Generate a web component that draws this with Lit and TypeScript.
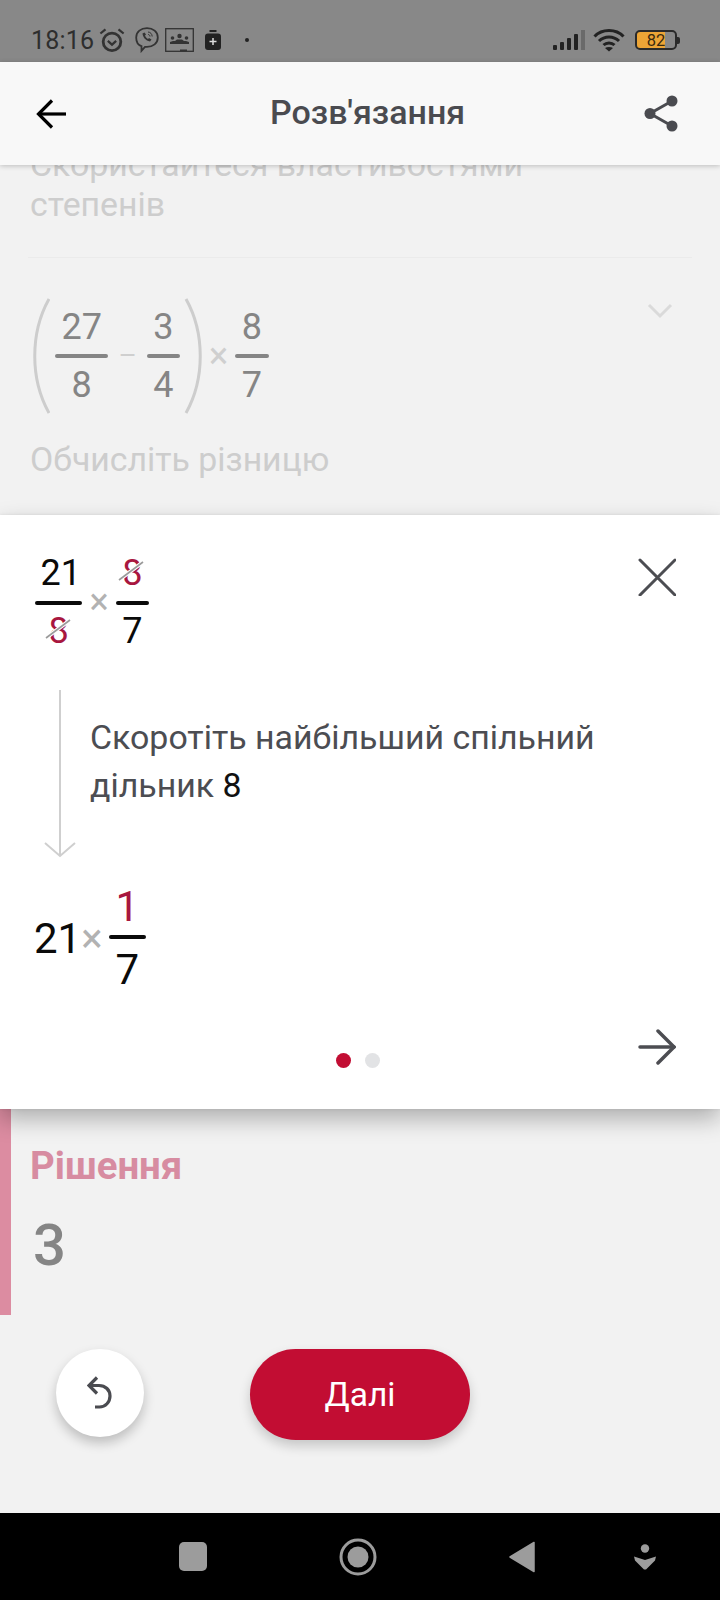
import { LitElement, html, css } from "lit";
import { customElement } from "lit/decorators.js";

const frac = (n: unknown, d: unknown, cls = "") => html`<span class="frac ${cls}"><span class="num">${n}</span><span class="bar"></span><span class="den">${d}</span></span>`;
const struck = html`<span class="struck">8<svg class="slash" viewBox="0 0 26 22" fill="none"><path d="M1 20L25 2" stroke="#fff" stroke-width="4"/><path d="M1 20L25 2" stroke="#9a9a9a" stroke-width="1.6"/></svg></span>`;

@customElement("app-root")
export class AppRoot extends LitElement {
  static styles = css`
    :host { display: flex; flex-direction: column; width: 720px; height: 1600px; overflow: hidden; font-family: Roboto, "Noto Sans", sans-serif; background: #f2f2f2; }
    svg { display: block; flex: none; }
    .status { height: 62px; flex: none; background: #888; display: flex; align-items: center; padding: 18px 0 0 31px; box-sizing: border-box; color: #2e2e2e; }
    .time { font-size: 25px; width: 68px; letter-spacing: .2px; }
    .status .i2 { margin-left: 10px; }
    .status .i3 { margin-left: 6px; }
    .status .i4 { margin-left: 11px; }
    .status .dot { width: 4px; height: 4px; border-radius: 50%; background: #222; margin-left: 24px; }
    .status .spacer { flex: 1; }
    .sig { margin-right: 1px; }
    .wifi { margin-left: 7px; margin-right: 1px; }
    .batt { width: 38px; height: 15px; padding: 1px 0 0; border: 2.5px solid #2a2a2a; border-radius: 5px; margin-left: 9px; box-sizing: content-box; overflow: hidden; font-size: 16.5px; color: #3a2a10; display: flex; align-items: center; justify-content: center; background: linear-gradient(90deg, #eda536 0 74%, transparent 74%); }
    .nub { width: 3px; height: 7px; background: #2a2a2a; margin-right: 40px; border-radius: 0 2px 2px 0; }
    .appbar { height: 103px; flex: none; background: #f8f8f8; display: flex; align-items: center; padding: 0 42px 0 36px; box-sizing: border-box; position: relative; z-index: 3; box-shadow: 0 1px 5px rgba(0,0,0,.22); }
    .title { font-size: 34px; font-weight: 500; color: #4a4b50; margin-left: 202px; flex: 1; padding-bottom: 3px; }
    .dim { height: 350px; flex: none; overflow: hidden; padding: 0 28px 0 30px; box-sizing: border-box; color: #cdcdcd; font-size: 33.800px; line-height: 40px; }
    .hint { margin-top: -20px; }
    .rule { height: 1px; background: #ebebeb; margin: 32px 0 0 -2px; }
    .eq { display: flex; align-items: center; margin-top: 38px; position: relative; color: #858585; height: 120px; }
    .chev { position: absolute; right: 19px; top: 7px; }
    .frac { display: inline-flex; flex-direction: column; align-items: center; line-height: 1; }
    .frac .bar { display: block; height: 4px; border-radius: 2px; background: currentColor; align-self: stretch; }
    .eq .frac { font-size: 36px; }
    .eq .num { margin-bottom: 9px; } .eq .den { margin-top: 9px; }
    .w1 { margin-left: 5px; } .w1 .num { padding: 0 6.500px; }
    .w2 .num { padding: 0 6.500px; } .w3 .num { padding: 0 6.500px; }
    .rp { margin-left: 4px; }
    .minus { color: #cfcfcf; font-size: 28px; margin: 0 10px; }
    .times { color: #cfcfcf; font-size: 36px; line-height: 1; margin: 0 7px 0 5px; }
    .note { margin-top: 24px; }
    .sheet { height: 594px; flex: none; background: #fff; position: relative; z-index: 2; box-shadow: 0 0 3px rgba(0,0,0,.08), 0 10px 22px rgba(0,0,0,.28); padding: 40px 44px 0 35px; box-sizing: border-box; display: flex; flex-direction: column; color: #0a0a0a; }
    .top { display: flex; justify-content: space-between; align-items: flex-start; }
    .expr { display: flex; align-items: center; }
    .expr .frac { font-size: 36px; }
    .expr .num { margin-bottom: 10px; } .expr .den { margin-top: 8px; }
    .x { color: #b2b2b2; font-size: 36px; line-height: 1; margin: 0 7px; }
    .close { margin-top: 3px; }
    .struck { position: relative; color: #a8173f; display: inline-block; }
    .slash { position: absolute; left: -4px; top: 5px; width: 26px; height: 22px; }
    .f1 .num { padding: 0 1.500px 0 5.500px; }
    .f2 .num { padding: 0 6.500px; }
    .step { display: flex; margin-top: 41px; height: 168px; margin-left: 9px; }
    .arrow { width: 32px; flex: none; }
    .step p { margin: 24px 0 0 14px; font-size: 33.900px; line-height: 47.500px; color: #4c4d52; }
    .step b { font-weight: 400; color: #111; }
    .res { display: flex; align-items: center; margin-top: 28px; font-size: 42px; margin-left: -1px; }
    .res .x { font-size: 40px; margin: 0 6px 0 0; }
    .res .frac { font-size: 42px; }
    .res .num { color: #a8173f; padding: 0 7px 7px; }
    .res .den { margin-top: 10px; }
    .foot { display: flex; align-items: center; position: relative; height: 60px; margin-top: 25px; justify-content: flex-end; }
    .foot svg { margin-top: 2px; }
    .dots { position: absolute; left: 301px; top: 37px; display: flex; gap: 14px; }
    .dots i { width: 15px; height: 15px; border-radius: 50%; background: #e2e3e5; }
    .dots i.on { background: #c20d33; }
    .lower { height: 404px; flex: none; display: flex; flex-direction: column; }
    .answer { height: 206px; flex: none; border-left: 11px solid #dc8ca1; box-sizing: border-box; padding: 35px 0 0 19px; }
    .alabel { font-size: 38.400px; font-weight: 700; color: #d78ca1; line-height: 44px; }
    .aval { font-size: 58px; line-height: 66px; font-weight: 500; color: #858585; margin-top: 24px; margin-left: 3px; }
    .btns { display: flex; align-items: flex-start; padding: 34px 0 0 56px; }
    .undo { width: 88px; height: 88px; border-radius: 50%; background: #fff; display: flex; align-items: center; justify-content: center; box-shadow: 0 6px 12px rgba(0,0,0,.22); }
    .next { width: 220px; height: 91px; border-radius: 46px; background: #c20d33; color: #fff; font-size: 33.500px; display: flex; align-items: center; justify-content: center; margin-left: 106px; box-shadow: 0 6px 12px rgba(0,0,0,.18); box-sizing: border-box; }
    .nav { flex: 1; background: #000; display: flex; align-items: center; padding: 0 0 0 179px; box-sizing: border-box; }
    .nav .sq { width: 28px; height: 29px; border-radius: 5px; background: #9c9c9c; flex: none; }
    .n2 { margin-left: 132px; } .n3 { margin-left: 132px; } .n4 { margin-left: 98px; }
  `;

  render() {
    return html`
      <div class="status">
        <span class="time">18:16</span>
        <svg width="26" height="26" viewBox="0 0 28 26" fill="none" stroke="#333"><circle cx="14" cy="15" r="9.500" stroke-width="3"/><path d="M9.500 14l4.500 4 4.500-4" stroke-width="2.400"/><path d="M1.500 6L7 1.500M26.500 6L21 1.500" stroke-width="2.400"/></svg>
        <svg class="i2" width="24" height="26" viewBox="0 0 24 26" fill="none" stroke="#333" stroke-width="1.800"><path d="M12 1.200c6 0 10.800 3.400 10.800 9.300S18 19.800 12 19.800h-2L6.500 23.800v-4.700C3 18 1.200 15 1.200 10.500 1.200 4.600 6 1.200 12 1.200z"/><path d="M7.500 6.500c.5 4 3 7 7.500 8l1.500-2-2.500-1.500-1 1c-1.500-.7-2.500-2-3-3.500l1-1L9.500 5.500z" fill="#333" stroke="none"/><path d="M13 5c2.500.2 4 1.800 4.200 4.500M13 7.500c1 0 2 .8 2 2" stroke-width="1"/></svg>
        <svg class="i3" width="29" height="25" viewBox="0 0 29 25" fill="none"><rect x=".7" y=".7" width="27.600" height="22.600" stroke="#333" stroke-width="1.300"/><circle cx="14.500" cy="8" r="2.200" fill="#333"/><circle cx="7.500" cy="10" r="1.800" fill="#333"/><circle cx="21.500" cy="10" r="1.800" fill="#333"/><path d="M5 16h19v-2l-3-1h-2l-2-1.500h-5L10 13H8l-3 1z" fill="#333"/><rect x="15" y="21.500" width="7" height="1.600" fill="#333"/></svg>
        <svg class="i4" width="16" height="20" viewBox="0 0 16 20"><rect x="4.500" y="0" width="7" height="2" fill="#222"/><rect x="0" y="3.500" width="16" height="16.500" rx="3" fill="#222"/><path d="M8 8v7M4.500 11.500h7" stroke="#ddd" stroke-width="1.500"/></svg>
        <span class="dot"></span>
        <span class="spacer"></span>
        <svg class="sig" width="32" height="20" viewBox="0 0 32 20"><g fill="#222"><rect x="0" y="15" width="4" height="5" rx="1"/><rect x="7" y="12" width="4" height="8" rx="1"/><rect x="14" y="8" width="4" height="12" rx="1"/><rect x="21" y="4" width="4" height="16" rx="1"/></g><rect x="28" y="0" width="4" height="20" fill="#6a6a6a"/></svg>
        <svg class="wifi" width="32" height="24" viewBox="0 0 32 24" fill="none" stroke="#222" stroke-width="3"><path d="M1.500 8.500C9 .5 23 .5 30.500 8.500"/><path d="M6 13c5.500-5.500 14.500-5.500 20 0"/><path d="M10.500 17c3-2.800 8-2.800 11 0"/><path d="M16 23.500l-4-3.500c2.300-1.500 5.700-1.500 8 0z" fill="#222" stroke="none"/></svg>
        <span class="batt">82</span><span class="nub"></span>
      </div>
      <div class="appbar">
        <svg width="32" height="30" viewBox="0 0 32 30" fill="none" stroke="#000" stroke-width="3.200"><path d="M30 15H3"/><path d="M16 1.500L2.500 15 16 28.500"/></svg>
        <span class="title">Розв'язання</span>
        <svg width="34" height="37" viewBox="0 0 34 37" fill="#4a4b50"><circle cx="28" cy="6" r="5.500"/><circle cx="28" cy="31" r="5.500"/><circle cx="6" cy="18.500" r="5.500"/><path d="M28 6L6 18.500 28 31" fill="none" stroke="#4a4b50" stroke-width="3"/></svg>
      </div>
      <div class="dim">
        <div class="hint">Скористайтеся властивостями<br />степенів</div>
        <div class="rule"></div>
        <div class="eq">
          <svg width="20" height="118" viewBox="0 0 20 118" fill="none" stroke="#cdcdcd" stroke-width="3"><path d="M19 2C0 36 0 82 19 116"/></svg>
          ${frac("27", "8", "w1")}
          <span class="minus">–</span>
          ${frac("3", "4", "w2")}
          <svg class="rp" width="20" height="118" viewBox="0 0 20 118" fill="none" stroke="#cdcdcd" stroke-width="3"><path d="M2 2C21 36 21 82 2 116"/></svg>
          <span class="times">×</span>
          ${frac("8", "7", "w3")}
          <svg class="chev" width="26" height="16" viewBox="0 0 26 16" fill="none" stroke="#dadada" stroke-width="3"><path d="M2 2l11 11L24 2"/></svg>
        </div>
        <div class="note">Обчисліть різницю</div>
      </div>
      <div class="sheet">
        <div class="top">
          <div class="expr">
            ${frac("21", struck, "f1")}
            <span class="x">×</span>
            ${frac(struck, "7", "f2")}
          </div>
          <svg class="close" width="38" height="38" viewBox="0 0 38 38" stroke="#4c4d52" stroke-width="3" stroke-linecap="round"><path d="M2 2l35 35M37 2L2 37"/></svg>
        </div>
        <div class="step">
          <svg class="arrow" width="32" height="168" viewBox="0 0 32 168" fill="none" stroke="#cfcfcf" stroke-width="2"><path d="M16 0V166"/><path d="M1 153l15 13 15-13"/></svg>
          <p>Скоротіть найбільший спільний<br />дільник <b>8</b></p>
        </div>
        <div class="res">
          <span>21</span><span class="x">×</span>
          ${frac("1", "7")}
        </div>
        <div class="foot">
          <div class="dots"><i class="on"></i><i></i></div>
          <svg width="38" height="36" viewBox="0 0 38 36" fill="none" stroke="#4c4d52" stroke-width="3.500" stroke-linecap="round"><path d="M2 18H36"/><path d="M20 2l16 16-16 16"/></svg>
        </div>
      </div>
      <div class="lower">
        <div class="answer">
          <div class="alabel">Рішення</div>
          <div class="aval">3</div>
        </div>
        <div class="btns">
          <div class="undo"><svg width="26" height="34" viewBox="0 0 26 34" fill="none" stroke="#4a4b50" stroke-width="3.200"><path d="M10 1.500L2 9.500l8 8"/><path d="M2.500 9.500h9.500c6.500 0 11 4.500 11 10.500s-4.500 11-10.500 11H8"/></svg></div>
          <div class="next">Далі</div>
        </div>
      </div>
      <div class="nav">
        <span class="sq"></span>
        <svg class="n2" width="38" height="38" viewBox="0 0 38 38"><circle cx="19" cy="19" r="17" fill="none" stroke="#9c9c9c" stroke-width="3"/><circle cx="19" cy="19" r="10.500" fill="#9c9c9c"/></svg>
        <svg class="n3" width="26" height="32" viewBox="0 0 26 32"><path d="M25 1.500V30.500L1 16z" fill="#9c9c9c" stroke="#9c9c9c" stroke-width="1.500" stroke-linejoin="round"/></svg>
        <svg class="n4" width="24" height="26" viewBox="0 0 24 26" fill="#9c9c9c"><circle cx="12" cy="4.500" r="4.200"/><path d="M1 12.500l11 3.500 11-3.500-1 4L13 25.500h-2L2 16.500z"/></svg>
      </div>
    `;
  }
}
